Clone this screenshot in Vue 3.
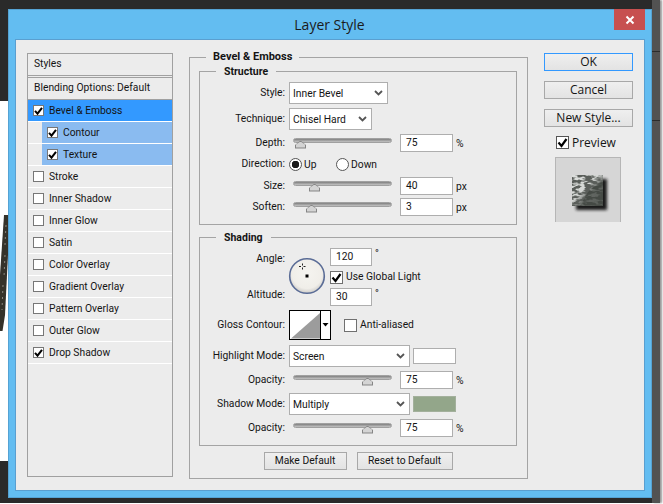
<script setup>
const styles = [
  { name: 'Bevel & Emboss', on: true, state: 'active' },
  { name: 'Contour', on: true, state: 'sub' },
  { name: 'Texture', on: true, state: 'sub' },
  { name: 'Stroke' },
  { name: 'Inner Shadow' },
  { name: 'Inner Glow' },
  { name: 'Satin' },
  { name: 'Color Overlay' },
  { name: 'Gradient Overlay' },
  { name: 'Pattern Overlay' },
  { name: 'Outer Glow' },
  { name: 'Drop Shadow', on: true }
]
</script>

<template>
  <div class="stage">
    <div class="bg-top"></div>
    <div class="bg-bottom"></div>
    <div class="bg-side">
      <span class="grip grip-a"></span>
      <span class="grip grip-b"></span>
    </div>
    <svg class="bg-art" width="8" height="125" viewBox="0 0 8 125">
      <defs>
        <filter id="artBlur" x="-40%" y="-10%" width="180%" height="120%"><feGaussianBlur stdDeviation="0.7" /></filter>
      </defs>
      <polygon points="4,0 8,0 8,40 5,100 2.5,116 0,116 0,60" fill="#34312c" filter="url(#artBlur)" />
      <path d="M6 10 5 30M5 40 4 62M3 70 2 95" stroke="#8a8780" stroke-width="1" stroke-dasharray="2 4" fill="none" />
    </svg>

    <div class="window">
      <div class="titlebar">
        <span class="title">Layer Style</span>
        <div class="close">
          <svg width="10" height="10" viewBox="0 0 10 10">
            <path d="M1.5 1.5 8.5 8.5M8.5 1.5 1.5 8.5" stroke="#fff" stroke-width="2" />
          </svg>
        </div>
      </div>

      <div class="content">
        <div class="list">
          <div class="list-head">Styles</div>
          <div class="list-blend">Blending Options: Default</div>
          <div v-for="s in styles" :key="s.name" class="list-row" :class="s.state">
            <span class="list-fill">
              <span class="box-sm">
                <svg v-if="s.on" width="11" height="10" viewBox="0 0 11 10">
                  <path d="M2 4.8 4.5 7.6 9 1.8" fill="none" stroke="#000" stroke-width="2" />
                </svg>
              </span>
              <span class="list-text">{{ s.name }}</span>
            </span>
          </div>
        </div>

        <div class="main">
          <div class="group outer">
            <span class="legend legend-outer">Bevel &amp; Emboss</span>

            <div class="group structure">
              <span class="legend">Structure</span>
              <div class="row">
                <label class="lbl">Style:</label>
                <div class="select w-style">
                  <span>Inner Bevel</span>
                  <svg width="9" height="6" viewBox="0 0 9 6"><path d="M1 1 4.5 4.5 8 1" fill="none" stroke="#555" stroke-width="1.8" /></svg>
                </div>
              </div>
              <div class="row mt4">
                <label class="lbl">Technique:</label>
                <div class="select w-tech">
                  <span>Chisel Hard</span>
                  <svg width="9" height="6" viewBox="0 0 9 6"><path d="M1 1 4.5 4.5 8 1" fill="none" stroke="#555" stroke-width="1.8" /></svg>
                </div>
              </div>
              <div class="row mt4 short">
                <label class="lbl">Depth:</label>
                <div class="slider"><i class="thumb" :style="{ left: '1px' }"></i></div>
                <div class="input">75</div>
                <span class="unit">%</span>
              </div>
              <div class="row mt3 short">
                <label class="lbl">Direction:</label>
                <span class="radio on"></span>
                <span class="radio-text up">Up</span>
                <span class="radio"></span>
                <span class="radio-text">Down</span>
              </div>
              <div class="row mt4 short">
                <label class="lbl">Size:</label>
                <div class="slider"><i class="thumb" :style="{ left: '15px' }"></i></div>
                <div class="input">40</div>
                <span class="unit">px</span>
              </div>
              <div class="row mt3 short">
                <label class="lbl">Soften:</label>
                <div class="slider"><i class="thumb" :style="{ left: '12px' }"></i></div>
                <div class="input">3</div>
                <span class="unit">px</span>
              </div>
            </div>

            <div class="group shading">
              <span class="legend">Shading</span>
              <div class="dial-block">
                <div class="dial-labels">
                  <label class="lbl">Angle:</label>
                  <label class="lbl">Altitude:</label>
                </div>
                <svg class="dial" width="38" height="38" viewBox="0 0 38 38">
                  <defs>
                    <radialGradient id="dialFill" cx="50%" cy="42%" r="55%">
                      <stop offset="0%" stop-color="#f5f4f0" />
                      <stop offset="80%" stop-color="#f0eee9" />
                      <stop offset="100%" stop-color="#d5d3cf" />
                    </radialGradient>
                  </defs>
                  <circle cx="19" cy="19" r="17.3" fill="url(#dialFill)" stroke="#5a6c96" stroke-width="1.6" />
                  <rect x="17.5" y="17.5" width="3" height="3" fill="#000" />
                  <path d="M14.5 6.5v2M14.5 10.5v2M11 9.5h2M15.5 9.5h2" stroke="#222" stroke-width="1" />
                </svg>
                <div class="dial-controls">
                  <div class="line">
                    <div class="input small">120</div>
                    <span class="deg">°</span>
                  </div>
                  <div class="line check-line">
                    <span class="box-lg">
                      <svg width="13" height="13" viewBox="0 0 13 13"><path d="M2.5 6.5 5.5 10 10.5 3" fill="none" stroke="#000" stroke-width="2.2" /></svg>
                    </span>
                    <span class="check-text">Use Global Light</span>
                  </div>
                  <div class="line">
                    <div class="input small">30</div>
                    <span class="deg">°</span>
                  </div>
                </div>
              </div>
              <div class="row gloss-row">
                <label class="lbl">Gloss Contour:</label>
                <svg class="gloss" width="42" height="30" viewBox="0 0 42 30">
                  <rect x="0.5" y="0.5" width="41" height="29" fill="#fff" stroke="#000" />
                  <polygon points="2,28.5 31,3 31,28.5" fill="#9c9c9c" />
                  <path d="M31.5 0v30" stroke="#000" />
                  <polygon points="33.5,13 39.5,13 36.5,16.5" fill="#000" />
                </svg>
                <span class="box-lg anti"></span>
                <span class="check-text">Anti-aliased</span>
              </div>
              <div class="row mode-row">
                <label class="lbl">Highlight Mode:</label>
                <div class="select w-mode">
                  <span>Screen</span>
                  <svg width="9" height="6" viewBox="0 0 9 6"><path d="M1 1 4.5 4.5 8 1" fill="none" stroke="#555" stroke-width="1.8" /></svg>
                </div>
                <span class="swatch white"></span>
              </div>
              <div class="row mt4 short">
                <label class="lbl">Opacity:</label>
                <div class="slider"><i class="thumb" :style="{ left: '68px' }"></i></div>
                <div class="input">75</div>
                <span class="unit">%</span>
              </div>
              <div class="row mt4">
                <label class="lbl">Shadow Mode:</label>
                <div class="select w-mode">
                  <span>Multiply</span>
                  <svg width="9" height="6" viewBox="0 0 9 6"><path d="M1 1 4.5 4.5 8 1" fill="none" stroke="#555" stroke-width="1.8" /></svg>
                </div>
                <span class="swatch green"></span>
              </div>
              <div class="row mt4 short">
                <label class="lbl">Opacity:</label>
                <div class="slider"><i class="thumb" :style="{ left: '68px' }"></i></div>
                <div class="input">75</div>
                <span class="unit">%</span>
              </div>
            </div>

            <div class="defaults">
              <button class="btn make">Make Default</button>
              <button class="btn reset">Reset to Default</button>
            </div>
          </div>
        </div>

        <div class="side">
          <button class="btn big primary">OK</button>
          <button class="btn big">Cancel</button>
          <button class="btn big">New Style...</button>
          <div class="preview-check">
            <span class="box-lg dark">
              <svg width="13" height="13" viewBox="0 0 13 13"><path d="M2.5 6.5 5.5 10 10.5 3" fill="none" stroke="#000" stroke-width="2.2" /></svg>
            </span>
            <span>Preview</span>
          </div>
          <div class="preview">
            <svg class="thumbnail" width="40" height="40" viewBox="0 0 40 40">
              <defs>
                <filter id="soft" x="-30%" y="-30%" width="160%" height="160%"><feGaussianBlur stdDeviation="1.6" /></filter>
                <filter id="grain" x="0" y="0" width="100%" height="100%">
                  <feTurbulence type="fractalNoise" baseFrequency="0.15 0.36" numOctaves="2" seed="11" />
                  <feColorMatrix type="matrix" values="0 0 0 0 0.72  0 0 0 0 0.74  0 0 0 0 0.72  4 4 0 0 -3.7" />
                </filter>
                <linearGradient id="fade" x1="0" y1="0" x2="1" y2="1">
                  <stop offset="0%" stop-color="#fff" />
                  <stop offset="42%" stop-color="#eee" />
                  <stop offset="58%" stop-color="#333" />
                  <stop offset="100%" stop-color="#222" />
                </linearGradient>
                <mask id="fadeMask"><rect width="31" height="31" fill="url(#fade)" /></mask>
                <clipPath id="square"><rect width="31" height="31" /></clipPath>
              </defs>
              <rect x="4" y="4" width="31" height="31" fill="#1c1c1c" filter="url(#soft)" />
              <g clip-path="url(#square)">
                <rect width="31" height="31" fill="#454a45" />
                <polygon points="0,0 31,0 31,4 16,17 8,31 0,31" fill="#5a5e5a" />
                <g mask="url(#fadeMask)">
                  <rect width="31" height="31" filter="url(#grain)" />
                </g>
              </g>
            </svg>
          </div>
        </div>
      </div>
    </div>
  </div>
</template>

<style scoped>
.stage {
  position: relative;
  width: 663px;
  height: 504px;
  overflow: hidden;
  box-sizing: border-box;
  padding: 9px 0 0 8px;
  background: #ffffff;
  font-family: Roboto, "Liberation Sans", sans-serif;
  font-size: 10.3px;
  color: #141414;
}
.bg-top {
  position: absolute;
  left: 0;
  top: 0;
  width: 660px;
  height: 101px;
  background: #2a2a2a;
}
.bg-bottom {
  position: absolute;
  left: 0;
  top: 461px;
  width: 660px;
  height: 42px;
  background: #2a2a2a;
}
.bg-side {
  position: absolute;
  left: 652px;
  top: 0;
  width: 8px;
  height: 503px;
  background: #525252;
  box-shadow: 2px 0 2px #9a9a9a;
}
.grip {
  position: absolute;
  left: 0;
  width: 8px;
  height: 1px;
  background: #2c2c2c;
}
.grip-a { top: 51px; }
.grip-b { top: 120px; }
.bg-art {
  position: absolute;
  left: 0;
  top: 215px;
}

.window {
  position: relative;
  box-sizing: border-box;
  width: 644px;
  height: 489px;
  background: #63bdf1;
  border: 1px solid #55a3d4;
  display: flex;
  flex-direction: column;
  padding: 0 6px 6px;
}
.titlebar {
  position: relative;
  height: 29px;
  flex: none;
  display: flex;
  justify-content: center;
}
.title {
  font-family: "Open Sans", sans-serif;
  font-size: 14px;
  line-height: 29px;
  color: #1b1b1b;
  margin-left: -1px;
}
.close {
  position: absolute;
  right: 0;
  top: -1px;
  width: 31px;
  height: 21px;
  background: #c75050;
  display: flex;
  align-items: center;
  justify-content: center;
}
.content {
  flex: 1;
  box-sizing: border-box;
  background: #ececec;
  border: 1px solid #5a9fd0;
  display: flex;
  gap: 16px;
  padding: 13px 11px 0;
}

/* style list */
.list {
  box-sizing: border-box;
  width: 146px;
  height: 424px;
  flex: none;
  border: 1px solid #a0a0a0;
}
.list-head {
  height: 21px;
  line-height: 20px;
  padding-left: 6px;
  border-bottom: 1px solid #a0a0a0;
}
.list-blend {
  height: 21px;
  margin-top: 1px;
  line-height: 20px;
  padding-left: 6px;
  border-top: 1px solid #a0a0a0;
  border-bottom: 1px solid #a0a0a0;
}
.list-row {
  box-sizing: border-box;
  height: 22px;
  border-bottom: 1px solid #fff;
  display: flex;
}
.list-fill {
  flex: 1;
  display: flex;
  align-items: center;
  padding-left: 5px;
  gap: 5px;
}
.list-text {
  margin-top: -1px;
}
.list-row.active .list-fill {
  background: #3399ff;
}
.list-row.sub {
  padding-left: 14px;
}
.list-row.sub .list-fill {
  background: #8abbf0;
}
.box-sm {
  box-sizing: border-box;
  width: 11px;
  height: 11px;
  flex: none;
  background: #fff;
  border: 1px solid #777;
  display: flex;
  align-items: center;
  justify-content: center;
}
.box-sm svg { flex: none; }

/* groups */
.main {
  width: 339px;
  flex: none;
  padding-top: 4px;
}
.group {
  position: relative;
  box-sizing: border-box;
  border: 1px solid #a4a4a4;
}
.outer {
  height: 422px;
  padding: 13px 10px 0 9px;
}
.structure {
  height: 154px;
  padding-top: 10px;
}
.shading {
  height: 209px;
  margin-top: 12px;
  padding-top: 10px;
}
.legend {
  position: absolute;
  top: -7px;
  left: 16px;
  padding: 0 8px;
  background: #ececec;
  font-weight: 700;
  font-size: 10.5px;
  line-height: 14px;
}
.legend-outer {
  top: -8px;
  padding: 0 7px;
  font-size: 11px;
}
.row {
  display: flex;
  align-items: center;
  height: 22px;
}
.row.short { height: 18px; }
.mt3 { margin-top: 3px; }
.mt4 { margin-top: 4px; }
.lbl {
  box-sizing: border-box;
  width: 85px;
  flex: none;
  text-align: right;
  white-space: nowrap;
  margin: -2px 4px 0 0;
}
.select {
  box-sizing: border-box;
  height: 22px;
  background: #fff;
  border: 1px solid #aeaeae;
  display: flex;
  align-items: center;
  justify-content: space-between;
  padding: 0 4px 0 3px;
  flex: none;
}
.w-style { width: 99px; }
.w-tech { width: 83px; }
.w-mode { width: 121px; }
.slider {
  position: relative;
  box-sizing: border-box;
  width: 99px;
  height: 5px;
  margin: -6px 8px 0 4px;
  flex: none;
  border-radius: 3px;
  background: linear-gradient(#7f7f7f, #c4c4c4);
  border: 1px solid #a0a0a0;
}
.thumb {
  position: absolute;
  top: 2px;
  width: 11px;
  height: 8px;
  background: #858585;
  clip-path: polygon(50% 0, 100% 55%, 100% 100%, 0 100%, 0 55%);
}
.thumb::after {
  content: "";
  position: absolute;
  left: 1px;
  top: 1px;
  width: 9px;
  height: 6px;
  background: #d4d4d4;
  clip-path: polygon(50% 0, 100% 50%, 100% 100%, 0 100%, 0 50%);
}
.input {
  box-sizing: border-box;
  width: 53px;
  height: 18px;
  line-height: 16px;
  background: #fff;
  border: 1px solid #aeaeae;
  padding-left: 5px;
  flex: none;
}
.input.small { width: 42px; }
.unit { margin-left: 3px; }
.deg { margin: -8px 0 0 3px; }
.radio {
  box-sizing: border-box;
  width: 13px;
  height: 13px;
  flex: none;
  border-radius: 50%;
  background: #fff;
  border: 1px solid #555;
}
.radio.on {
  background: radial-gradient(circle, #1a1a1a 0 3.5px, #fff 4px);
}
.radio-text { margin-left: 2px; }
.radio-text.up { width: 32px; }

.dial-block {
  display: flex;
  height: 58px;
}
.dial-labels {
  width: 85px;
  flex: none;
  display: flex;
  flex-direction: column;
  justify-content: space-between;
  padding: 4px 0 5px;
  box-sizing: border-box;
}
.dial-labels .lbl {
  margin: 0;
}
.dial {
  flex: none;
  margin: 9px 4px 0 3px;
}
.dial-controls {
  display: flex;
  flex-direction: column;
  margin-left: 0;
}
.line {
  display: flex;
  align-items: center;
  height: 18px;
}
.check-line {
  height: 22px;
}
.box-lg {
  box-sizing: border-box;
  width: 13px;
  height: 13px;
  flex: none;
  background: #fff;
  border: 1px solid #707070;
  display: flex;
  align-items: center;
  justify-content: center;
}
.box-lg svg { flex: none; }
.box-lg.dark { border-color: #555; }
.check-text { margin: -2px 0 0 3px; }
.gloss-row {
  height: 30px;
  margin-top: 4px;
}
.gloss { flex: none; }
.anti { margin-left: 13px; }
.mode-row { margin-top: 5px; }
.swatch {
  box-sizing: border-box;
  width: 43px;
  height: 16px;
  margin-left: 3px;
  flex: none;
}
.swatch.white {
  background: #fff;
  border: 1px solid #aeaeae;
}
.swatch.green {
  background: #93a68a;
  border: 1px solid #a3b09c;
}
.defaults {
  display: flex;
  justify-content: center;
  gap: 10px;
  margin-top: 6px;
  padding-left: 0;
}

/* buttons */
.btn {
  box-sizing: border-box;
  height: 18px;
  padding: 0;
  font: inherit;
  color: inherit;
  line-height: 16px;
  background: linear-gradient(#efefef, #e3e3e3);
  border: 1px solid #a8a8a8;
  white-space: nowrap;
}
.make { width: 83px; }
.reset { width: 96px; }
.side {
  width: 89px;
  flex: none;
  display: flex;
  flex-direction: column;
  gap: 10px;
}
.big {
  width: 89px;
  font-family: "Open Sans", sans-serif;
  font-size: 12px;
}
.primary {
  border-color: #3399ff;
}
.preview-check {
  display: flex;
  align-items: center;
  gap: 3px;
  height: 13px;
  margin: -1px 0 0 12px;
  font-family: "Open Sans", sans-serif;
  font-size: 12px;
}
.preview {
  box-sizing: border-box;
  width: 66px;
  height: 65px;
  margin: -2px 0 0 11px;
  background: #d6d6d6;
  border: 1px solid #b6b6b6;
  border-bottom: 0;
  padding: 17px 0 0 16px;
}
.thumbnail {
  display: block;
}
</style>
